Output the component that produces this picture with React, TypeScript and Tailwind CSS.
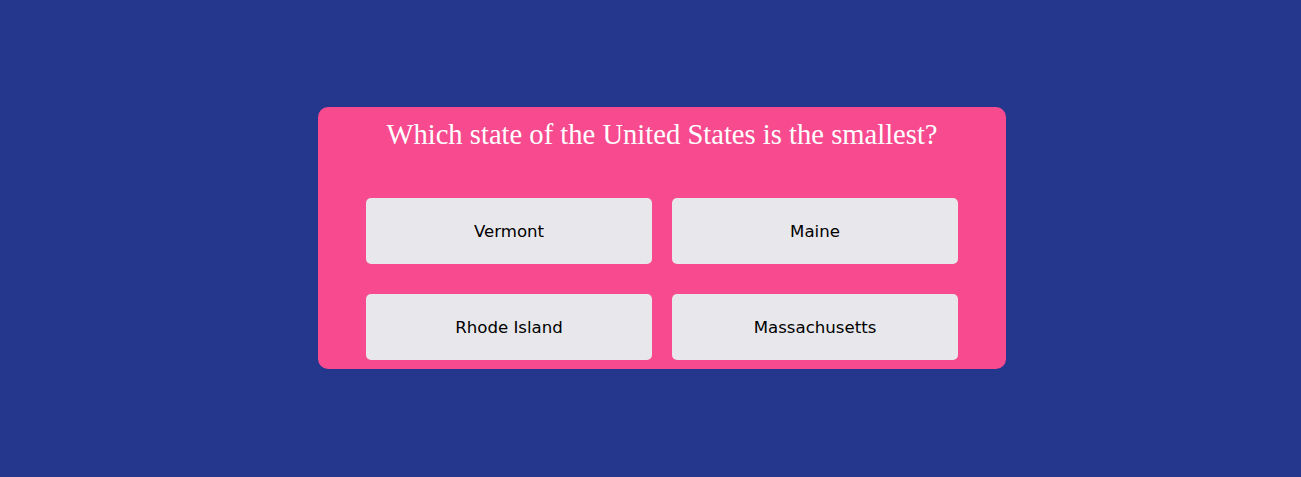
export default function App() {
  const answers = ["Vermont", "Maine", "Rhode Island", "Massachusetts"];

  return (
    <div className="flex h-screen w-full justify-center bg-[#25378d] pt-[107px]">
      <div className="ml-[23px] flex h-[262px] w-[688px] flex-col rounded-[10px] bg-[#f74a8f] px-12 pt-[12px]">
        <h1 className="text-center font-['Liberation_Serif',serif] text-[28.6px] leading-[32px] text-white">
          Which state of the United States is the smallest?
        </h1>
        <div className="mt-[47px] grid grid-cols-2 gap-x-5 gap-y-[30px]">
          {answers.map((a) => (
            <button
              key={a}
              className="flex h-[66px] items-center justify-center rounded-[5px] bg-[#e8e8ec] pt-[3px] font-['DejaVu_Sans',sans-serif] text-[16.6px] text-black"
            >
              {a}
            </button>
          ))}
        </div>
      </div>
    </div>
  );
}
